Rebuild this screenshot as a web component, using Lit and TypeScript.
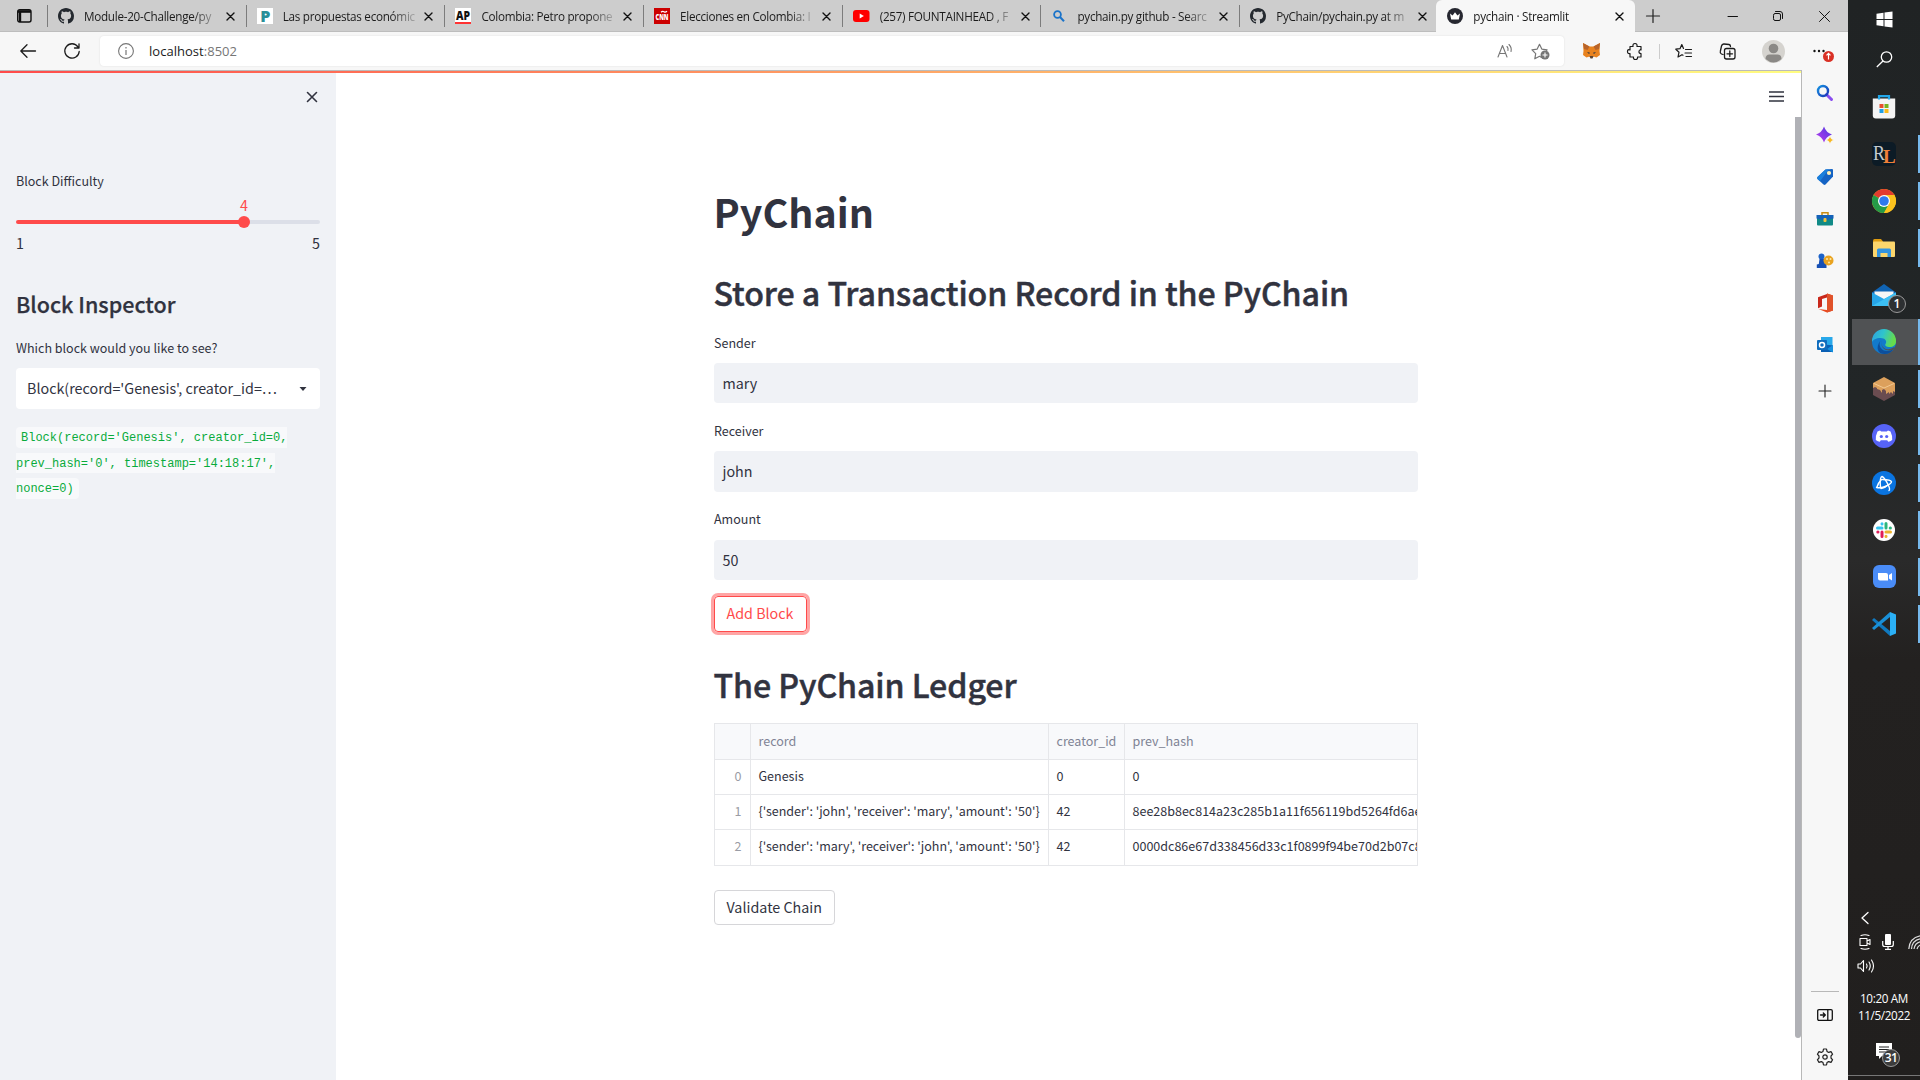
import { LitElement, html, svg, css, nothing } from "lit";
import { customElement } from "lit/decorators.js";

const icon = (w: number, h: number, body: unknown, cls = "") =>
  html`<svg class="ic ${cls}" width=${w} height=${h} viewBox="0 0 ${w} ${h}" fill="none">${body}</svg>`;

const github = icon(16, 16, svg`<path fill="#24292f" d="M8 0C3.58 0 0 3.58 0 8c0 3.54 2.29 6.53 5.47 7.59.4.07.55-.17.55-.38 0-.19-.01-.82-.01-1.49-2.01.37-2.53-.49-2.69-.94-.09-.23-.48-.94-.82-1.13-.28-.15-.68-.52-.01-.53.63-.01 1.08.58 1.23.82.72 1.21 1.87.87 2.33.66.07-.52.28-.87.51-1.07-1.78-.2-3.64-.89-3.64-3.95 0-.87.31-1.59.82-2.15-.08-.2-.36-1.02.08-2.12 0 0 .67-.21 2.2.82.64-.18 1.32-.27 2-.27s1.36.09 2 .27c1.53-1.04 2.2-.82 2.2-.82.44 1.1.16 1.92.08 2.12.51.56.82 1.27.82 2.15 0 3.07-1.87 3.75-3.65 3.95.29.25.54.73.54 1.48 0 1.07-.01 1.93-.01 2.2 0 .21.15.46.55.38A8.01 8.01 0 0 0 16 8c0-4.42-3.58-8-8-8"/>`);
const pares = icon(16, 16, svg`<rect width="16" height="16" fill="#fff"/><text x="3.2" y="14" class="logo" font-size="16" fill="#2a8f98">P</text>`);
const ap = icon(16, 16, svg`<rect width="16" height="16" fill="#fff"/><rect y="14" width="16" height="2" fill="#f33"/><text x="1" y="12" class="logo" font-size="12" textLength="14" lengthAdjust="spacingAndGlyphs" fill="#111">AP</text>`);
const cnn = icon(16, 16, svg`<rect width="16" height="16" fill="#c00"/><text x="1.500" y="12" class="logo" font-size="9" textLength="13" lengthAdjust="spacingAndGlyphs" fill="#fff">CNN</text><path d="M7 4.200q1.500-1.400 3-.4t3-.6" stroke="#fff" stroke-width="1.200"/>`);
const youtube = icon(17, 16, svg`<rect y="2" width="16.500" height="12" rx="3" fill="#f00"/><path d="M6.700 5.500v5l4.200-2.500z" fill="#fff"/>`);
const bingTab = icon(16, 16, svg`<circle cx="6.500" cy="6.500" r="3.400" stroke="#1a73c9" stroke-width="1.800"/><path d="M9 9l4 4.200" stroke="#1a73c9" stroke-width="2"/>`);
const crown = icon(16, 16, svg`<circle cx="8" cy="8" r="8" fill="#262730"/><path d="M3 5.500l2.600 2L8 4.200l2.400 3.300 2.600-2-1.200 6H4.200z" fill="#fff"/>`);

const tabs: [unknown, string][] = [
  [github, "Module-20-Challenge/py"],
  [pares, "Las propuestas económic"],
  [ap, "Colombia: Petro propone"],
  [cnn, "Elecciones en Colombia: I"],
  [youtube, "(257) FOUNTAINHEAD , F"],
  [bingTab, "pychain.py github - Searc"],
  [github, "PyChain/pychain.py at m"],
  [crown, "pychain · Streamlit"],
];

const line = (w: number, h: number, d: string, color = "#1b1b1b", sw = 1.2, cls = "") =>
  icon(w, h, svg`<path d=${d} stroke=${color} stroke-width=${sw} stroke-linecap="round" stroke-linejoin="round"/>`, cls);

const xIcon = line(9, 9, "M1 1l7 7M8 1l-7 7", "#111", 1.4);

const edgeIcons = [
  icon(18, 18, svg`<defs><linearGradient id="g1" x1="0" y1="0" x2="1" y2="1"><stop offset="0" stop-color="#1590e0"/><stop offset="1" stop-color="#1a35b8"/></linearGradient></defs><path d="M10.500 10.500l5 5" stroke="#8a4df0" stroke-width="3" stroke-linecap="round"/><circle cx="7" cy="7" r="5" stroke="url(#g1)" stroke-width="2.400"/>`),
  icon(18, 18, svg`<defs><linearGradient id="g2" x1="0" y1="1" x2="1" y2="0"><stop offset="0" stop-color="#c03cf0"/><stop offset="1" stop-color="#4a3adf"/></linearGradient></defs><path d="M8 .5q2 6 8 8-6 2-8 8-2-6-8-8 6-2 8-8z" fill="url(#g2)"/><path d="M14 10.500q.9 2.600 3.500 3.500-2.600.9-3.500 3.500-.9-2.600-3.500-3.500 2.600-.9 3.500-3.500z" fill="#f8b820" stroke="#f7f7f7" stroke-width=".5"/>`),
  icon(18, 18, svg`<path d="M9.500 1.500L16 1q1 0 1 1v6.500L9.500 16.500q-1 .8-2 0L1.500 11q-.8-1 0-2z" fill="#1463c4"/><path d="M1.500 9L9.500 1.500 13 1.200 4 13.300 1.500 11q-.8-1 0-2z" fill="#1a7fdc"/><circle cx="13" cy="5" r="2.100" fill="#fff1b8"/>`),
  icon(18, 18, svg`<path d="M6 5V2.800h6V5" stroke="#c98b12" stroke-width="1.500"/><rect x="1" y="5" width="16" height="10.500" rx="1" fill="#108a86"/><path d="M0.500 5h17v3.500L9 10.500.5 8.500z" fill="#1562b8"/><rect x="7.500" y="8" width="3" height="4" rx="1" fill="#f3c23c"/>`),
  icon(18, 18, svg`<circle cx="5.500" cy="4.500" r="3" fill="#1b62c9"/><path d="M3.500 7h4.500l1 5h1.500v4H.8v-3.500l2-.5z" fill="#1750b5"/><circle cx="12.500" cy="8.500" r="5" fill="#e9a320"/><circle cx="11" cy="7" r="1" fill="#ffe9a8"/><circle cx="14.500" cy="7" r="1" fill="#ffe9a8"/><circle cx="13" cy="10.500" r="1" fill="#ffe9a8"/>`),
  icon(18, 20, svg`<path d="M11 1L2 4.300v11L6 13.500V6l5-1.500z" fill="#c9281b"/><path d="M11 .5l6 2v15l-6 2-8.500-3.500L11 17z" fill="#ea4a1f"/><path d="M11 .5l6 2v15l-6 2z" fill="#e0522a"/>`),
  icon(18, 18, svg`<rect x="5" y="1" width="11.500" height="10" fill="#28a8ea"/><path d="M5 8l12 1.500V16H5z" fill="#0a5fb4"/><path d="M17 9l-6 4 6 3.500z" fill="#1490df"/><rect x="1" y="4" width="10" height="10" rx="1" fill="#0f6cbd"/><circle cx="6" cy="9" r="2.500" stroke="#fff" stroke-width="1.500"/>`),
];

const store = icon(24, 26, svg`<path d="M.8 4.500h22.400V21.500q0 3-3 3H3.800q-3 0-3-3z" fill="#f4f4f4"/><path d="M7 5.500V2.200h10v3.300" stroke="#22a7ea" stroke-width="2.200"/><path d="M7.500 10h4v4h-4z" fill="#e8502c"/><path d="M12.500 10h4v4h-4z" fill="#78b41c"/><path d="M7.500 15h4v4h-4z" fill="#1e9fe6"/><path d="M12.500 15h4v4h-4z" fill="#fbb916"/>`);
const rl = icon(24, 24, svg`<rect width="24" height="24" rx="5" fill="#0c1b26"/><text x="1" y="18" class="serif" font-size="20" textLength="12" lengthAdjust="spacingAndGlyphs" fill="#c5cbd0">R</text><text x="11" y="21" class="serif" font-size="19" font-weight="bold" fill="#f08038">L</text>`);
const chrome = icon(24, 24, svg`<circle cx="12" cy="12" r="12" fill="#fcc31e"/><path d="M12 12L1.600 6A12 12 0 0 1 22.400 6z" fill="#e33b2e"/><path d="M1.600 6A12 12 0 0 0 12 24l5-9-5-3z" fill="#259b48"/><path d="M12 6h10.400A12 12 0 0 1 12 24l5.200-9z" fill="#fcc31e"/><circle cx="12" cy="12" r="6" fill="#fff"/><circle cx="12" cy="12" r="4.800" fill="#3079ee"/>`);
const explorer = icon(22, 18, svg`<path d="M0 2q0-2 1.500-2H8l2 2.500V6H0z" fill="#e09c10"/><rect y="2.500" width="22" height="15.500" rx="1" fill="#fcd66c"/><path d="M4 18v-7q0-1.500 1.500-1.500h11Q18 9.500 18 11v7h-3.500v-4h-7v4z" fill="#3494e0"/>`);
const mail = icon(24, 24, svg`<path d="M0 9.500L12 1l12 8.500V12H0z" fill="#1064b4"/><path d="M2.500 8.500h19V14L12 18l-9.500-4z" fill="#f6f6f6"/><path d="M0 9.500L12 16l12-6.500V23H0z" fill="#27a5e8"/><path d="M0 23L24 9.500V23z" fill="#3cc0f4"/>`);
const edge = icon(24, 24, svg`<defs><linearGradient id="e1" x1="0" y1="0" x2="1" y2=".3"><stop offset="0" stop-color="#2d9fe2"/><stop offset=".5" stop-color="#2fc4cc"/><stop offset="1" stop-color="#66dc4c"/></linearGradient></defs><circle cx="12" cy="12" r="12" fill="#127acb"/><path d="M0 11A12 12 0 0 1 24 11c.3 4-3 6-6 6-4 0-5.500-1.500-4.500-3 2-3-.5-6-5-6C4 8 1 10 0 12z" fill="url(#e1)"/><path d="M8.500 10.500C5.500 16 10 22 16.500 21q3-.5 5.500-3-3 6-9.500 6C6 24 3 18 8.500 10.500z" fill="#0d4f9c"/><path d="M10 10.500q-1.500 4.500 2 7.500 4 2.800 9.500-.5 1.500-1 1 .5l-1 1.500q-3 1.500-6.500.8C10 19.300 8.500 14 10 10.500z" fill="#505355"/>`);
const cube = icon(22, 24, svg`<path d="M0 6v12l11 6 11-6V6L11 12z" fill="#6a4c50"/><path d="M11 0l11 6v9l-2-1v3l-2-2-2 2v-2l-3 2v-3l-2-2-2 1v3l-2-3-3-1v-1l-2-1-2 1V6z" fill="#dca05c"/><path d="M1 6.500L11 11l10-4.500" stroke="#f2c891"/>`);
const discord = icon(24, 24, svg`<circle cx="12" cy="12" r="12" fill="#5663f7"/><path d="M8 6.500l1.200 1h5.600l1.200-1 2.500 1q2 4 1.700 8.500-2 1.500-4 1.700l-1-1.500H8.800l-1 1.500q-2-.2-4-1.700Q3.500 11.500 5.500 7.500z" fill="#fff"/><circle cx="9.300" cy="12.500" r="1.600" fill="#5663f7"/><circle cx="14.700" cy="12.500" r="1.600" fill="#5663f7"/>`);
const bnet = icon(24, 24, svg`<circle cx="12" cy="12" r="12" fill="#0a74e0"/><g stroke="#fff" stroke-width="1.400" stroke-linecap="round"><path d="M8.500 16.500Q7.500 6 10 5.500q2.200.5 6 8 2.500 5 1 6"/><path d="M4.500 16.500q5 1 10-1.500 5-2.700 5-4.200-1-2.300-9-2.300"/><path d="M5 16q1-4 4.500-7.500M16.500 13.500q-3.500 3.500-7.500 4"/></g>`);
const slack = icon(22, 22, svg`<circle cx="11" cy="11" r="11" fill="#fff"/><g stroke-width="3" stroke-linecap="round"><path d="M4.500 9h4.500M9 4.800v.2" stroke="#36c5f0"/><path d="M13 4.500V9M17.200 9h.2" stroke="#2eb67d"/><path d="M17.500 13H13M13 17.200v.2" stroke="#ecb22e"/><path d="M9 17.500V13M4.800 13h.2" stroke="#e01e5a"/></g>`);
const zoomIc = icon(23, 23, svg`<rect width="23" height="23" rx="6" fill="#4a8cf7"/><path d="M5 8h8q2 0 2 2v5.500H7q-2 0-2-2zM16 10l3-2v7.500l-3-2z" fill="#fff"/>`);
const vscode = icon(24, 24, svg`<path d="M0 8l2-2 16 13v5z" fill="#1079bf"/><path d="M0 16l2 2L18 5V0z" fill="#1a90d8"/><path d="M18 0l6 2.500v19L18 24z" fill="#2bb0f6"/>`);

const apps: { ic: unknown; run?: boolean; active?: boolean; badge?: string }[] = [
  { ic: store },
  { ic: rl, run: true },
  { ic: chrome, run: true },
  { ic: explorer, run: true },
  { ic: mail, badge: "1" },
  { ic: edge, run: true, active: true },
  { ic: cube, run: true },
  { ic: discord, run: true },
  { ic: bnet, run: true },
  { ic: slack, run: true },
  { ic: zoomIc, run: true },
  { ic: vscode, run: true },
];

const rows = [
  ["0", "Genesis", "0", "0"],
  ["1", "{'sender': 'john', 'receiver': 'mary', 'amount': '50'}", "42", "8ee28b8ec814a23c285b1a11f656119bd5264fd6ae"],
  ["2", "{'sender': 'mary', 'receiver': 'john', 'amount': '50'}", "42", "0000dc86e67d338456d33c1f0899f94be70d2b07c8"],
];

const base = css`
  * { box-sizing: border-box; }
  .ic { display: block; flex: none; overflow: visible; }
  .logo { font-family: "Open Sans", sans-serif; font-weight: 800; }
  .serif { font-family: "Liberation Serif", serif; }
`;

@customElement("browser-chrome")
class BrowserChrome extends LitElement {
  static styles = [base, css`
    :host { display: block; font-family: "Open Sans", sans-serif; color: #1b1b1b; }
    .strip { height: 32px; background: #cdcdcd; display: flex; box-shadow: inset 0 -1px #bdbdbd; }
    .lead { width: 47px; padding: 9px 0 0 16.500px; }
    .tab { width: 198.700px; height: 32px; display: flex; align-items: center; padding-left: 10px; border-left: 1px solid #7c7c7c; border-image: linear-gradient(transparent 6px, #7c7c7c 6px, #7c7c7c 26px, transparent 26px) 1; }
    .tab.on { background: #f7f7f7; border: 0; border-radius: 6px 6px 0 0; padding-left: 11px; margin-left: -1.500px; }
    .title { margin-left: 10px; width: 134px; margin-right: 7.500px; font-size: 11.700px; letter-spacing: -0.280px; line-height: 20px; white-space: nowrap; overflow: hidden; -webkit-mask-image: linear-gradient(90deg, #000 108px, transparent 138px); }
    .plus { margin: 9px 0 0 10.500px; }
    .win { margin-left: auto; display: flex; width: 138px; justify-content: space-around; align-items: center; height: 32px; }
    .bar { height: 38px; background: #f7f7f7; display: flex; align-items: center; }
    .back { margin-left: 20px; }
    .reload { margin-left: 28px; }
    .omni { margin-left: 20px; width: 1463.500px; height: 30px; background: #fff; border-radius: 4px; box-shadow: 0 0 2px #ddd; display: flex; align-items: center; padding: 0 13px 0 18px; }
    .url { margin-left: 15px; flex: 1; font-size: 13px; letter-spacing: 0.030px; line-height: 20px; }
    .dim { color: #767676; }
    .star { margin-left: 18px; }
    .tools { flex: 1; display: grid; grid-template-columns: 55px 34px 14px 34px 54px 38px 1fr; justify-items: center; align-items: center; }
    .sep { width: 1px; height: 15px; background: #ccc; }
    .more { justify-self: start; margin-left: 20px; }
  `];
  render() {
    return html`
      <div class="strip">
        <div class="lead">${icon(15, 14, svg`<rect x=".7" y=".7" width="13.300" height="12.300" rx="2" stroke="#111" stroke-width="1.400"/><path d="M1 2.500h13" stroke="#111" stroke-width="2.600"/><path d="M3 3v10" stroke="#111" stroke-width="2.400"/>`)}</div>
        ${tabs.map(([ic, t], i) => html`<div class="tab ${i === 7 ? "on" : ""}">${ic}<div class="title">${t}</div>${xIcon}</div>`)}
        <div class="plus">${line(14, 14, "M7 0.500v13M.5 7h13", "#222", 1.2)}</div>
        <div class="win">
          ${line(10, 10, "M0 5.500h9.500", "#111", 1)}
          ${line(10, 10, "M.5 4q0-1.500 1.500-1.500h4Q7.500 2.500 7.500 4v4q0 1.500-1.500 1.500H2Q.5 9.500.5 8zM2.500.5H7Q9.500.5 9.500 3v4.500", "#111", 1)}
          ${line(11, 11, "M.5.5l10 10M10.500.5l-10 10", "#111", 1)}
        </div>
      </div>
      <div class="bar">
        ${line(16, 14, "M15.500 7H.8M7 .8L.8 7 7 13.200", "#1b1b1b", 1.3, "back")}
        ${line(16, 17, "M13.900 3.800A7.200 7.200 0 1 0 15.200 8.500M15 .8V5h-4.500", "#1b1b1b", 1.3, "reload")}
        <div class="omni">
          ${icon(16, 16, svg`<circle cx="8" cy="8" r="7.400" stroke="#767676" stroke-width="1.100"/><path d="M8 7v5M8 4v1.500" stroke="#767676" stroke-width="1.200"/>`)}
          <div class="url">localhost<span class="dim">:8502</span></div>
          ${line(16, 16, "M1 14L5.500 2.500 10 14M2.500 10.500h6M10 3.500q1.500 1.500 1 4M12 1.500q3 3 2 7", "#767676", 1.1)}
          ${icon(20, 18, svg`<path d="M11 15.800l-2.500-1.500-4.700 2.500.9-5.200L1 7.800l5.200-.7L8.500 2.300l2.300 4.800 5.300.7-1 1" stroke="#767676" stroke-width="1.200" stroke-linejoin="round"/><circle cx="14" cy="13" r="4.500" fill="#767676"/><path d="M14 10.500v5M11.500 13h5" stroke="#fff" stroke-width="1.100"/>`, "star")}
        </div>
        <div class="tools">
          ${icon(17, 16, svg`<path d="M0 0l6.500 3.500h4L17 0l-.5 8 .5 4-3.500 2.500-3-1-1 1.500h-2l-1-1.500-3 1L0 12l.5-4z" fill="#e8821e"/><path d="M0 0l6.500 3.500-2 3.500L1 6zM17 0l-6.500 3.500 2 3.500L16 6z" fill="#b8642a"/><path d="M4 9l3 .8-1 1.200zM13 9l-3 .8 1 1.200z" fill="#233447"/><path d="M6.500 13h4l-1 2.500h-2z" fill="#5c4433"/>`)}
          ${line(17, 17, "M3 3.500h3q-.5-3 2-3t2 3h4V7q-1.800-.5-2 1.500T14 10.500V14h-3.500q.5 2.500-2 2.500T6.500 14H3v-3.500Q.5 11 .5 8.500T3 7z", "#1b1b1b", 1.2)}
          <div class="sep"></div>
          ${line(17, 16, "M8.500 5.500L6.800 1.500 5 5.700.8 6.200 4 9.200 3 14l4-2.300 1 .6M10.500 6.500h6M10 10h6.500M11 13.500h5.500", "#1b1b1b", 1.2)}
          ${line(17, 17, "M4 11.500L2.500 11Q.8 10 1.300 8.500L2.500 3Q3 .8 5 1l5 .5q1.500.3 1.500 2M7.500 5.500h6.500q2 0 2 2V14q0 2-2 2H7.500q-2 0-2-2V7.500q0-2 2-2zM10.800 8v5.500M8 10.800h5.500", "#1b1b1b", 1.3)}
          ${icon(23, 23, svg`<circle cx="11.500" cy="11.500" r="11.500" fill="#d5d3cf"/><circle cx="11.500" cy="8.500" r="4.800" fill="#8b8986"/><path d="M3.500 19q0-4.500 4-4.500h8q4 0 4 4.500-8 7-16 0z" fill="#8b8986"/>`)}
          ${icon(22, 16, svg`<circle cx="1.500" cy="8" r="1.200" fill="#111"/><circle cx="6" cy="8" r="1.200" fill="#111"/><circle cx="10.500" cy="8" r="1.200" fill="#111"/><circle cx="15.500" cy="13.500" r="5.500" fill="#d93025"/><path d="M15.500 16.500v-6M13.500 12.300l2-2 2 2" stroke="#fff" stroke-width="1.200"/>`, "more")}
        </div>
      </div>`;
  }
}

@customElement("streamlit-page")
class StreamlitPage extends LitElement {
  static styles = [base, css`
    :host { display: flex; flex-direction: column; flex: 1; min-width: 0; background: #fff; border-top: 1px solid #bbb; border-right: 1px solid #b8b8b8; color: #31333f; font-family: "Noto Sans CJK SC", sans-serif; font-size: 14.320px; }
    .deco { height: 2px; background: linear-gradient(90deg, #ff4b4b, #fffd80); }
    .cols { flex: 1; display: flex; min-height: 0; }
    .side { width: 336px; background: #f0f2f6; padding: 18px 16px 0; }
    .close { display: flex; justify-content: flex-end; padding-right: 2px; height: 80px; }
    .small { font-size: 12.530px; line-height: 20px; }
    .val { color: #ff4b4b; line-height: 20px; font-size: 14.320px; margin: 4px 0 0; padding-left: 224px; }
    .track { height: 4px; border-radius: 4px; margin-top: 5px; background: linear-gradient(90deg, #ff4b4b 228px, #dcdfe8 228px); display: flex; align-items: center; padding-left: 222px; }
    .thumb { width: 12px; height: 12px; border-radius: 50%; background: #ff4b4b; }
    .ends { display: flex; justify-content: space-between; margin-top: 9px; font-size: 14.320px; line-height: 20px; }
    h3 { margin: 34.500px 0 0; font-size: 21.500px; line-height: 32px; font-weight: 500; -webkit-text-stroke: 0.250px #31333f; }
    .q { margin-top: 18px; }
    .select { margin-top: 10.500px; height: 41px; background: #fff; border-radius: 4px; display: flex; align-items: center; justify-content: space-between; padding: 0 13px 0 11px; }
    .pick { margin-top: -2px; }
    .code { margin-top: 16.500px; line-height: 25.600px; font-family: "Liberation Mono", monospace; font-size: 12px; }
    code { font: inherit; color: #09ab3b; background: #f8f9fb; border-radius: 4px; padding: 3.500px 5px 3px; }
    .main { flex: 1; display: flex; min-width: 0; }
    .center { width: 704px; margin-left: 378px; padding-top: 111px; }
    h1 { margin: 0; font-size: 39.400px; line-height: 53px; font-weight: 700; text-indent: -0.500px; }
    h2 { margin: 34px 0 18.500px; font-size: 32.200px; line-height: 43px; font-weight: 500; letter-spacing: -0.100px; -webkit-text-stroke: 0.450px #31333f; white-space: nowrap; text-indent: -0.500px; }
    .field { margin-bottom: 17.800px; }
    .input { margin-top: 10.500px; height: 40.200px; border-radius: 4px; background: #f0f2f6; padding: 0 8.500px; line-height: 40.400px; }
    .btn { display: inline-block; height: 35.500px; line-height: 31.500px; border: 1px solid #d6d6d9; border-radius: 4px; padding: 0 11.500px; white-space: nowrap; }
    .add { margin-top: -1.500px; color: #ff4b4b; border-color: #ff4b4b; box-shadow: 0 0 0 3px rgba(255, 75, 75, 0.5); width: 93px; }
    h2.led { margin: 31.500px 0 16.200px; }
    .table { width: 704px; overflow: hidden; border: 1px solid #e6e7ea; margin-bottom: 24px; font-size: 12.530px; }
    .row { display: grid; grid-template-columns: 36px 298px 76px 600px; height: 35px; }
    .row.head { height: 36px; background: #f8f9fb; color: #808495; }
    .cell { border-right: 1px solid #e6e7ea; border-bottom: 1px solid #e6e7ea; padding: 0 7.500px; line-height: 31.500px; white-space: nowrap; overflow: hidden; }
    .head .cell { line-height: 34px; }
    .last .cell { border-bottom: 0; }
    .idx { text-align: right; padding-right: 8.500px; color: #9a9ca5; }
    .menu { margin: 17.500px 11px 0 auto; }
    .rail { width: 6px; padding-top: 44px; }
    .bar { height: 921px; background: #b0b1b6; border-radius: 0 0 3px 3px; }
  `];
  render() {
    const field = (l: string, v: string) => html`<div class="field"><div class="small">${l}</div><div class="input">${v}</div></div>`;
    return html`
      <div class="deco"></div>
      <div class="cols">
        <div class="side">
          <div class="close">${line(12, 12, "M1.500 1.500l9 9M10.500 1.500l-9 9", "#31333f", 1.6)}</div>
          <div class="small">Block Difficulty</div>
          <div class="val">4</div>
          <div class="track"><div class="thumb"></div></div>
          <div class="ends"><span>1</span><span>5</span></div>
          <h3>Block Inspector</h3>
          <div class="small q">Which block would you like to see?</div>
          <div class="select"><span class="pick">Block(record='Genesis', creator_id=…</span>${icon(8, 4, svg`<path d="M.5 0h7L4 4z" fill="#31333f"/>`)}</div>
          <div class="code"><code>Block(record='Genesis', creator_id=0,<br>prev_hash='0', timestamp='14:18:17',<br>nonce=0)</code></div>
        </div>
        <div class="main">
          <div class="center">
            <h1>PyChain</h1>
            <h2>Store a Transaction Record in the PyChain</h2>
            ${field("Sender", "mary")}${field("Receiver", "john")}${field("Amount", "50")}
            <div class="btn add">Add Block</div>
            <h2 class="led">The PyChain Ledger</h2>
            <div class="table">
              <div class="row head"><div class="cell"></div><div class="cell">record</div><div class="cell">creator_id</div><div class="cell">prev_hash</div></div>
              ${rows.map((r, i) => html`<div class="row ${i === 2 ? "last" : ""}">${r.map((c, j) => html`<div class="cell ${j ? "" : "idx"}">${c}</div>`)}</div>`)}
            </div>
            <div class="btn">Validate Chain</div>
          </div>
          <div class="menu">${icon(15, 11, svg`<path d="M0 1h15M0 5.500h15M0 10h15" stroke="#31333f" stroke-width="1.600"/>`)}</div>
          <div class="rail"><div class="bar"></div></div>
        </div>
      </div>`;
  }
}

@customElement("edge-sidebar")
class EdgeSidebar extends LitElement {
  static styles = [base, css`
    :host { display: flex; flex-direction: column; align-items: center; width: 46px; background: #f7f7f7; }
    .slot { height: 42.100px; display: flex; align-items: center; }
    .first { margin-top: 1.500px; }
    .plus { margin-top: 3.500px; }
    .foot { margin-top: auto; width: 28px; border-top: 1px solid #b8b8b8; height: 89px; padding-top: 2px; display: flex; flex-direction: column; align-items: center; }
  `];
  render() {
    return html`
      ${edgeIcons.map((i, n) => html`<div class="slot ${n ? "" : "first"}">${i}</div>`)}
      <div class="slot plus">${line(12, 12, "M6 0v12M0 6h12", "#222", 1.1)}</div>
      <div class="foot">
        <div class="slot">${line(16, 12, "M2 .7h12q1.300 0 1.300 1.300v8q0 1.300-1.300 1.300H2Q.7 11.300.7 10V2Q.7.7 2 .7zM10.800 1v10M3.500 6h4.500M6.300 4l2 2-2 2", "#111", 1.3)}</div>
        <div class="slot">${icon(18, 18, svg`<path d="M7.500 1h3l.5 2.400 1.700 1L15 3.600l1.600 2.600L15 8v2l1.600 1.800-1.600 2.600-2.300-.8-1.700 1-.5 2.400h-3L7 14.600l-1.700-1-2.300.8-1.600-2.600L3 10V8L1.400 6.200 3 3.600l2.300.8 1.700-1z" stroke="#222" stroke-width="1.200" stroke-linejoin="round"/><circle cx="9" cy="9" r="2.200" stroke="#222" stroke-width="1.200"/>`)}</div>
      </div>`;
  }
}

@customElement("task-bar")
class TaskBar extends LitElement {
  static styles = [base, css`
    :host { display: flex; flex-direction: column; width: 72px; height: 1080px; background: linear-gradient(#202324 0, #222627 400px, #2a2a2a 560px, #232120 660px, #211f1e 100%); color: #fff; font-family: "Open Sans", sans-serif; overflow: hidden; }
    .top { height: 83px; padding-top: 11px; display: flex; flex-direction: column; align-items: center; gap: 23px; }
    .app { height: 47px; display: flex; align-items: center; position: relative; padding-left: 2px; }
    .hold { width: 68px; height: 46px; display: flex; align-items: center; justify-content: center; }
    .active .hold { background: #505254; margin-left: 2px; width: 66px; padding-right: 2px; }
    .run { width: 2px; height: 38px; background: #76b9ed; }
    .active .run { height: 46px; }
    .badge { position: absolute; border: 1px solid #999; background: #2d3032; border-radius: 50%; width: 18px; height: 18px; font-size: 12px; line-height: 16px; text-align: center; font-weight: 600; left: 40px; top: 24px; }
    .tray { margin-top: auto; height: 168px; display: flex; flex-direction: column; }
    .chev { margin: 0 0 0 13px; }
    .r1 { display: flex; align-items: center; gap: 11px; margin: 9px 0 0 11px; width: 80px; height: 18px; }
    .wifi { margin-left: 3px; }
    .vol { margin: 8px 0 0 9px; }
    .clock { margin-top: 17px; font-size: 11.700px; letter-spacing: -0.350px; line-height: 17px; text-align: center; white-space: nowrap; }
    .note { position: relative; height: 40px; margin-top: auto; border-bottom: 1px solid #777; margin-bottom: 4px; padding: 7px 0 0 28px; }
    .note .badge { left: 34px; top: 13px; background: #3c3c3c; letter-spacing: -0.500px; }
  `];
  render() {
    return html`
      <div class="top">
        ${icon(17, 17, svg`<path d="M.5 2.800L7.500 1.800V8H.5zM8.500 1.600L16.500.5V8h-8zM.5 9h7v6.200l-7-1zM8.500 9h8v7.500l-8-1.100z" fill="#fff"/>`)}
        ${icon(17, 17, svg`<circle cx="10.500" cy="6" r="5.200" stroke="#fff" stroke-width="1.300"/><path d="M7 10L.8 16" stroke="#fff" stroke-width="1.300"/>`)}
      </div>
      ${apps.map((a) => html`<div class="app ${a.active ? "active" : ""}"><div class="hold">${a.ic}</div>${a.run ? html`<div class="run"></div>` : nothing}${a.badge ? html`<div class="badge">${a.badge}</div>` : nothing}</div>`)}
      <div class="tray">
        ${line(8, 12, "M7 .5L1 6l6 5.500", "#fff", 1.3, "chev")}
        <div class="r1">
          ${line(12, 16, "M2 1.500q4-1.500 8 0M2 14.500q4 1.500 8 0M1 4.500h7v7H1zM8 7l3-1.500v5L8 9", "#fff", 1.1)}
          ${icon(12, 16, svg`<rect x="3" y="0" width="6" height="11" rx="1" fill="#fff"/><path d="M.7 7v3.500q0 2 2 2h6.600q2 0 2-2V7M6 12.500V15M3 15.300h6" stroke="#fff" stroke-width="1.200"/>`)}
          ${icon(18, 16, svg`<g stroke="#ddd" stroke-width="1.200"><path d="M9 15q1-4 5-4.500M6 15q1-7 8-7.500M3.500 15Q4 5.500 14 4.500M.8 15Q1.500 3 14 1.500"/></g>`, "wifi")}
        </div>
        ${line(17, 14, "M1 5v4h2.500l3 3.500v-11l-3 3.500zM9.500 5q1.300 2 0 4M12 3q2.500 4 0 8M14.500 1q4 6 0 12", "#fff", 1.1, "vol")}
        <div class="clock">10:20 AM<br>11/5/2022</div>
        <div class="note">${icon(16, 16, svg`<path d="M0 0h16v13H6l-3 3v-3H0z" fill="#fff"/><path d="M3 4h10M3 6.500h10M3 9h7" stroke="#222"/>`)}<div class="badge">31</div></div>
      </div>`;
  }
}

@customElement("app-root")
class AppRoot extends LitElement {
  static styles = css`
    :host { display: flex; width: 1920px; height: 1080px; overflow: hidden; }
    .browser { width: 1848px; height: 1080px; display: flex; flex-direction: column; background: #f7f7f7; }
    .body { flex: 1; display: flex; min-height: 0; }
  `;
  render() {
    return html`
      <div class="browser">
        <browser-chrome></browser-chrome>
        <div class="body"><streamlit-page></streamlit-page><edge-sidebar></edge-sidebar></div>
      </div>
      <task-bar></task-bar>`;
  }
}
